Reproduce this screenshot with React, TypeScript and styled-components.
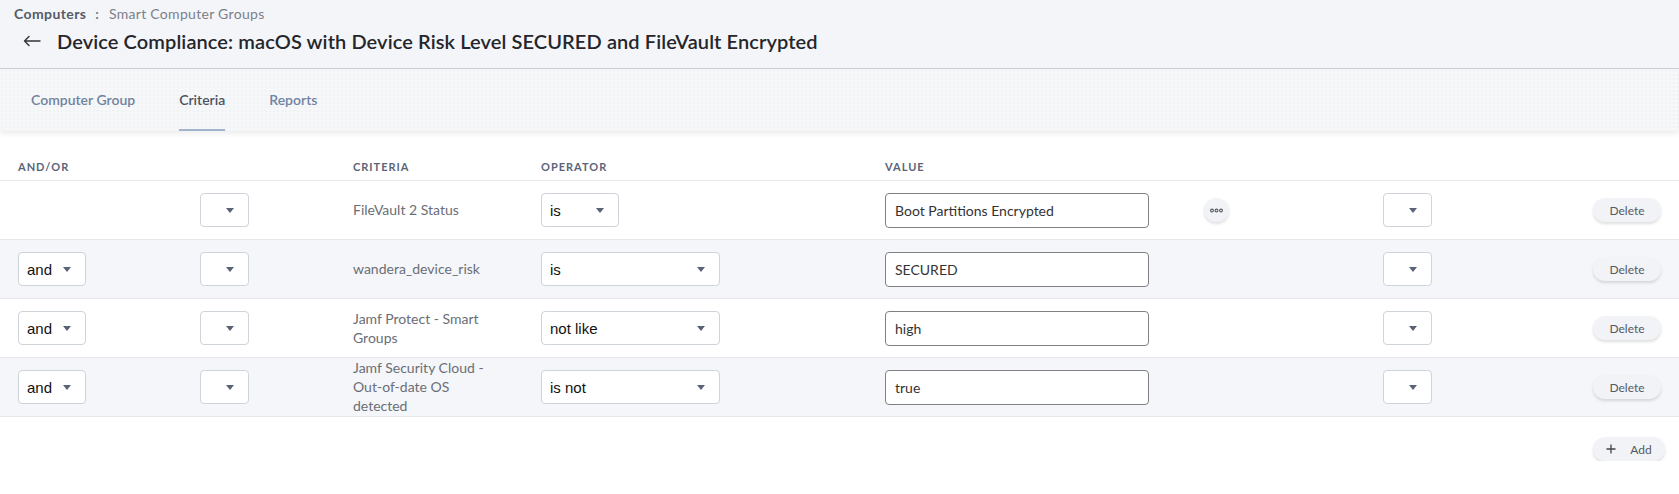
import React from "react";
import styled, { createGlobalStyle } from "styled-components";

const Global = createGlobalStyle`
  html, body { margin: 0; padding: 0; background: #ffffff; }
  body { font-family: "Lato", "Open Sans", Arial, sans-serif; color: #333; }
  * { box-sizing: border-box; }
`;

const FONT = `"Lato", "Open Sans", Arial, sans-serif`;

const Header = styled.header`
  height: 69px;
  background: #f4f5f9;
  border-bottom: 1px solid #c9cdd5;
  padding: 5px 0 0 14px;
  display: flex;
  flex-direction: column;
`;

const Crumbs = styled.div`
  display: flex;
  align-items: center;
  height: 18px;
  font-size: 14px;
  line-height: 18px;
`;

const CrumbRoot = styled.span`
  font-weight: 700;
  color: #555b66;
  letter-spacing: 0.4px;
`;

const CrumbSep = styled.span`
  color: #777c86;
  margin: 0 10px 0 9px;
  font-weight: 700;
`;

const CrumbLeaf = styled.span`
  color: #7b8089;
  letter-spacing: 0.3px;
`;

const TitleRow = styled.div`
  display: flex;
  align-items: center;
  height: 30px;
  margin-top: 3px;
`;

const BackButton = styled.span`
  display: inline-flex;
  width: 18px;
  margin-left: 9px;
  margin-right: 16px;
  color: #333;
`;

const Title = styled.h1`
  margin: 0;
  font-family: ${FONT};
  font-size: 20px;
  font-weight: 600;
  color: #24262b;
  letter-spacing: 0.1px;
`;

const TabBar = styled.nav`
  height: 62px;
  display: flex;
  gap: 44px;
  padding-left: 31px;
  background-color: #f6f7f9;
  background-image: radial-gradient(rgba(0, 0, 0, 0.02) 1px, transparent 1.2px);
  background-size: 4px 4px;
  box-shadow: 0 3px 5px rgba(0, 0, 0, 0.07);
  position: relative;
  z-index: 1;
`;

const Tab = styled.div<{ $active?: boolean }>`
  height: 62px;
  display: flex;
  align-items: center;
  font-size: 14px;
  font-weight: 600;
  color: ${(p) => (p.$active ? "#4c535f" : "#7083a0")};
  border-bottom: 2px solid ${(p) => (p.$active ? "#a3b3c9" : "transparent")};
  padding-top: 1px;
`;

const Table = styled.section`
  background: #fff;
`;

const COLS = "182px 153px 188px 344px 319px 179px 1fr auto";

const HeadRow = styled.div`
  display: grid;
  grid-template-columns: ${COLS};
  height: 50px;
  padding: 0 18px 6px;
  align-items: end;
  border-bottom: 1px solid #e6e8ec;
`;

const HeadCell = styled.div`
  font-size: 11px;
  font-weight: 700;
  letter-spacing: 1px;
  color: #5c6478;
  line-height: 14px;
`;

const Row = styled.div<{ $striped?: boolean }>`
  display: grid;
  grid-template-columns: ${COLS};
  height: 59px;
  padding: 0 18px;
  align-items: center;
  background: ${(p) => (p.$striped ? "#f5f6f9" : "#ffffff")};
  border-bottom: 1px solid #e6e8ec;
`;

const Cell = styled.div`
  display: flex;
  align-items: center;
`;

const CriteriaText = styled.div`
  font-size: 14px;
  line-height: 19px;
  color: #6a6e76;
  width: 150px;
  margin-top: -1px;
`;

const SelectBox = styled.div<{ $w: number }>`
  width: ${(p) => p.$w}px;
  height: 34px;
  background: #fff;
  border: 1px solid #cfd3da;
  border-radius: 4px;
  display: flex;
  align-items: center;
  padding-left: 8px;
  position: relative;
  font-family: "Liberation Sans", Arial, sans-serif;
  font-size: 15px;
  color: #111;
`;

const Caret = styled.span`
  position: absolute;
  right: 14px;
  top: 14px;
  width: 0;
  height: 0;
  border-left: 4px solid transparent;
  border-right: 4px solid transparent;
  border-top: 5px solid #5a6275;
`;

const ValueInput = styled.div`
  width: 264px;
  height: 35px;
  border: 1px solid #7f8185;
  border-radius: 4px;
  background: #fff;
  display: flex;
  align-items: center;
  padding-left: 9px;
  font-size: 14px;
  color: #333;
`;

const Pill = styled.button<{ $w: number }>`
  width: ${(p) => p.$w}px;
  height: 24px;
  border: none;
  border-radius: 12px;
  background: #f2f3f7;
  box-shadow: 0 2px 3px rgba(0, 0, 0, 0.13);
  font-family: ${FONT};
  font-size: 12px;
  color: #555a62;
  display: flex;
  align-items: center;
  justify-content: center;
  gap: 14px;
  padding: 0;
  cursor: pointer;
`;

const DotsButton = styled.button`
  width: 25px;
  height: 24px;
  border: none;
  border-radius: 50%;
  background: #f2f3f7;
  box-shadow: 0 2px 3px rgba(0, 0, 0, 0.13);
  display: flex;
  align-items: center;
  justify-content: center;
  padding: 0;
`;

const Footer = styled.div`
  display: flex;
  justify-content: flex-end;
  padding: 20px 14px 0 0;
`;

const Select = ({ w, value }: { w: number; value?: string }) => (
  <SelectBox $w={w}>
    {value}
    <Caret />
  </SelectBox>
);

type Crit = { andor?: string; name: string; op: string; opW: number; value: string; dots?: boolean };

const rows: Crit[] = [
  { name: "FileVault 2 Status", op: "is", opW: 78, value: "Boot Partitions Encrypted", dots: true },
  { andor: "and", name: "wandera_device_risk", op: "is", opW: 179, value: "SECURED" },
  { andor: "and", name: "Jamf Protect - Smart Groups", op: "not like", opW: 179, value: "high" },
  { andor: "and", name: "Jamf Security Cloud - Out-of-date OS detected", op: "is not", opW: 179, value: "true" },
];

export default function App() {
  return (
    <>
      <Global />
      <Header>
        <Crumbs>
          <CrumbRoot>Computers</CrumbRoot>
          <CrumbSep>:</CrumbSep>
          <CrumbLeaf>Smart Computer Groups</CrumbLeaf>
        </Crumbs>
        <TitleRow>
          <BackButton>
            <svg width="18" height="12" viewBox="0 0 18 12" fill="none" stroke="#333" strokeWidth="1.4" strokeLinecap="round" strokeLinejoin="round">
              <path d="M17 6H1.5M6 1.5L1.5 6L6 10.5" />
            </svg>
          </BackButton>
          <Title>Device Compliance: macOS with Device Risk Level SECURED and FileVault Encrypted</Title>
        </TitleRow>
      </Header>
      <TabBar>
        <Tab>Computer Group</Tab>
        <Tab $active>Criteria</Tab>
        <Tab>Reports</Tab>
      </TabBar>
      <Table>
        <HeadRow>
          <HeadCell>AND/OR</HeadCell>
          <HeadCell />
          <HeadCell>CRITERIA</HeadCell>
          <HeadCell>OPERATOR</HeadCell>
          <HeadCell>VALUE</HeadCell>
          <HeadCell />
          <HeadCell />
          <HeadCell />
        </HeadRow>
        {rows.map((r, i) => (
          <Row key={i} $striped={i % 2 === 1}>
            <Cell>{r.andor && <Select w={68} value={r.andor} />}</Cell>
            <Cell>
              <Select w={49} />
            </Cell>
            <Cell>
              <CriteriaText>{r.name}</CriteriaText>
            </Cell>
            <Cell>
              <Select w={r.opW} value={r.op} />
            </Cell>
            <Cell>
              <ValueInput>{r.value}</ValueInput>
            </Cell>
            <Cell>
              {r.dots && (
                <DotsButton aria-label="More">
                  <svg width="13" height="5" viewBox="0 0 13 5" fill="none" stroke="#555a62" strokeWidth="1.1">
                    <circle cx="2" cy="2.5" r="1.4" />
                    <circle cx="6.5" cy="2.5" r="1.4" />
                    <circle cx="11" cy="2.5" r="1.4" />
                  </svg>
                </DotsButton>
              )}
            </Cell>
            <Cell>
              <Select w={49} />
            </Cell>
            <Cell>
              <Pill $w={68}>Delete</Pill>
            </Cell>
          </Row>
        ))}
        <Footer>
          <Pill $w={72}>
            <svg width="10" height="10" viewBox="0 0 10 10" stroke="#444" strokeWidth="1.3">
              <path d="M5 0.5V9.5M0.5 5H9.5" />
            </svg>
            <span>Add</span>
          </Pill>
        </Footer>
      </Table>
    </>
  );
}
